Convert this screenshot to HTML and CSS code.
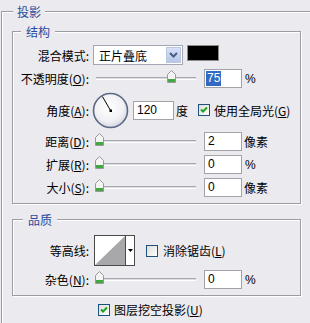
FILE: index.html
```html
<!DOCTYPE html>
<html lang="zh-CN">
<head>
  <meta charset="UTF-8" />
  <title>投影</title>
  <link rel="stylesheet" href="styles.css">
</head>
<body>
  <fieldset class="panel">
    <legend>投影</legend>

    <fieldset class="group group-struct">
      <legend>结构</legend>

      <div class="row row-blend">
        <span class="lbl">混合模式:</span>
        <div class="select">
          <span class="select-text">正片叠底</span>
          <span class="select-btn">
            <svg width="9" height="6" viewBox="0 0 9 6"><path d="M1 1 L4.5 4.5 L8 1" fill="none" stroke="#4a5d82" stroke-width="2"/></svg>
          </span>
        </div>
        <span class="swatch"></span>
      </div>

      <div class="row">
        <span class="lbl">不透明度(<u>O</u>):</span>
        <div class="slider"><span class="thumb" style="left:71px"></span></div>
        <span class="num"><span class="hl">75</span></span>
        <span class="unit">%</span>
      </div>

      <div class="row row-angle">
        <span class="lbl">角度(<u>A</u>):</span>
        <svg class="dial" width="37" height="37" viewBox="0 0 37 37">
          <defs>
            <radialGradient id="dialFill" cx="45%" cy="40%" r="60%">
              <stop offset="0" stop-color="#ffffff"/>
              <stop offset="0.7" stop-color="#f1f1f4"/>
              <stop offset="1" stop-color="#d6d6de"/>
            </radialGradient>
          </defs>
          <circle cx="18.5" cy="18.5" r="17" fill="url(#dialFill)" stroke="#5b6886" stroke-width="1.6"/>
          <line x1="18.5" y1="18.5" x2="10.5" y2="4.6" stroke="#000" stroke-width="1"/>
          <rect x="17.5" y="17.5" width="2.5" height="2.5" fill="#000"/>
        </svg>
        <span class="num num-angle">120</span>
        <span class="unit unit-cjk">度</span>
        <span class="chk chk-on"></span>
        <span class="chk-text">使用全局光(<u>G</u>)</span>
      </div>

      <div class="row">
        <span class="lbl">距离(<u>D</u>):</span>
        <div class="slider"><span class="thumb" style="left:-1px"></span></div>
        <span class="num">2</span>
        <span class="unit unit-cjk">像素</span>
      </div>

      <div class="row">
        <span class="lbl">扩展(<u>R</u>):</span>
        <div class="slider"><span class="thumb" style="left:-1px"></span></div>
        <span class="num">0</span>
        <span class="unit">%</span>
      </div>

      <div class="row">
        <span class="lbl">大小(<u>S</u>):</span>
        <div class="slider"><span class="thumb" style="left:-1px"></span></div>
        <span class="num">0</span>
        <span class="unit unit-cjk">像素</span>
      </div>
    </fieldset>

    <fieldset class="group group-quality">
      <legend>品质</legend>

      <div class="row row-contour">
        <span class="lbl">等高线:</span>
        <div class="contour">
          <span class="curve">
            <svg width="30" height="29" viewBox="0 0 30 29"><polygon points="0,29 30,0 30,29" fill="#a8a8aa"/></svg>
          </span>
          <span class="contour-btn">
            <svg width="5" height="3" viewBox="0 0 5 3"><polygon points="0,0 5,0 2.5,3" fill="#000"/></svg>
          </span>
        </div>
        <span class="chk"></span>
        <span class="chk-text">消除锯齿(<u>L</u>)</span>
      </div>

      <div class="row">
        <span class="lbl">杂色(<u>N</u>):</span>
        <div class="slider"><span class="thumb" style="left:-1px"></span></div>
        <span class="num">0</span>
        <span class="unit">%</span>
      </div>
    </fieldset>

    <div class="row row-knockout">
      <span class="chk chk-on"></span>
      <span class="chk-text">图层挖空投影(<u>U</u>)</span>
    </div>
  </fieldset>
</body>
</html>
```

FILE: styles.css
```css
body {
  margin: 0;
  background: #ebeaef;
  color: #000;
  font-family: "Noto Sans CJK SC", "Liberation Sans", sans-serif;
  font-size: 12px;
  overflow: hidden;
}
u {
  text-decoration: underline;
  text-underline-offset: 1px;
}
fieldset {
  margin: 0;
  padding: 0;
  min-inline-size: 0;
  border: 1px solid #9d9ca3;
  box-shadow: 1px 1px 0 #fff, inset 1px 1px 0 #fff;
}
legend {
  line-height: 15px;
  padding: 0 4px;
  color: #2a4a9c;
  background: #ebeaef;
}
.panel {
  margin: 4px 0 0 1px;
  width: 310px;
  height: 320px;
  padding-top: 5px;
  box-sizing: border-box;
}
.panel > legend {
  margin-left: 11px;
}
.group {
  width: 289px;
  margin-left: 10px;
  box-sizing: border-box;
}
.group > legend {
  margin-left: 8px;
  padding: 0 5px;
}
.group-struct {
  padding: 6px 0 6px 0;
  display: flex;
  flex-direction: column;
  gap: 4px;
}
.group-quality {
  margin-top: 8px;
  padding: 8px 0 6px 0;
  display: flex;
  flex-direction: column;
  gap: 4px;
}
.group-quality > legend {
  margin-left: 10px;
}
.row {
  display: flex;
  align-items: center;
  height: 19px;
}
.lbl {
  width: 76px;
  text-align: right;
  white-space: nowrap;
}
.row-blend {
  height: 20px;
}
.row-angle {
  height: 36px;
}
.row-contour {
  height: 31px;
}

/* blend mode dropdown */
.select {
  margin-left: 4px;
  width: 90px;
  height: 20px;
  box-sizing: border-box;
  border: 1px solid #a3a6b4;
  background: #fff;
  display: flex;
  align-items: center;
}
.select-text {
  flex: 1;
  padding-left: 5px;
}
.select-btn {
  width: 15px;
  height: 16px;
  margin-right: 1px;
  border: 1px solid #b8c6e0;
  box-sizing: border-box;
  background: linear-gradient(#d6e1f6, #b7c8e8);
  display: flex;
  align-items: center;
  justify-content: center;
}
.swatch {
  margin-left: 4px;
  width: 32px;
  height: 16px;
  box-sizing: border-box;
  border: 1px solid #8d8d8d;
  background: #000;
  align-self: flex-start;
}

/* sliders */
.slider {
  position: relative;
  margin-left: 7px;
  width: 100px;
  height: 1px;
  border-top: 1px solid #a9a8ae;
  border-bottom: 1px solid #fff;
  background: #dddce1;
}
.thumb {
  position: absolute;
  top: -8px;
  width: 9px;
  height: 13px;
  background: url("data:image/svg+xml,%3Csvg xmlns='http://www.w3.org/2000/svg' width='9' height='13'%3E%3Cpath d='M0.5 4.5 L4.5 0.5 L8.5 4.5 V12.5 H0.5 Z' fill='%23f4f4f4' stroke='%23999999'/%3E%3Crect x='1' y='9' width='7' height='3' fill='%2343a843'/%3E%3C/svg%3E") no-repeat;
}
.num {
  margin-left: 8px;
  width: 38px;
  height: 19px;
  box-sizing: border-box;
  border: 1px solid #a2a2a8;
  background: #fff;
  padding-left: 3px;
  font-family: "Liberation Sans", sans-serif;
  font-size: 12px;
  line-height: 17px;
}
.hl {
  display: inline-block;
  background: #316ac5;
  color: #fff;
  line-height: 15px;
  padding: 0 1px;
  margin-left: -2px;
  vertical-align: top;
  margin-top: 1px;
}
.unit {
  margin-left: 3px;
  font-family: "Liberation Sans", sans-serif;
}
.unit-cjk {
  font-family: "Noto Sans CJK SC", sans-serif;
  margin-left: 2px;
}

/* angle */
.dial {
  margin-left: 3px;
}
.num-angle {
  margin-left: 4px;
  width: 41px;
}
.chk {
  width: 12px;
  height: 12px;
  box-sizing: border-box;
  border: 1px solid #1c5180;
  background: linear-gradient(135deg, #dcdcd7, #fff);
  margin-left: 10px;
}
.chk-on {
  background: url("data:image/svg+xml,%3Csvg xmlns='http://www.w3.org/2000/svg' width='10' height='10'%3E%3Cpath d='M2 4.5 L4 6.5 L8 2.5' fill='none' stroke='%2321a121' stroke-width='2'/%3E%3C/svg%3E") no-repeat center, linear-gradient(135deg, #dcdcd7, #fff);
}
.chk-text {
  margin-left: 4px;
  white-space: nowrap;
}

/* contour */
.contour {
  margin-left: 5px;
  width: 41px;
  height: 31px;
  box-sizing: border-box;
  border: 1px solid #4a4a4a;
  background: #fff;
  display: flex;
}
.curve {
  width: 30px;
  border-right: 1px solid #4a4a4a;
  display: flex;
  align-items: flex-end;
}
.contour-btn {
  flex: 1;
  display: flex;
  align-items: center;
  justify-content: center;
}
.row-contour .chk {
  margin-left: 11px;
}
.row-contour .chk-text {
  margin-left: 5px;
}

.row-knockout {
  margin-top: 7px;
  height: 13px;
  padding-left: 96px;
}
.row-knockout .chk {
  margin-left: 0;
}
```
